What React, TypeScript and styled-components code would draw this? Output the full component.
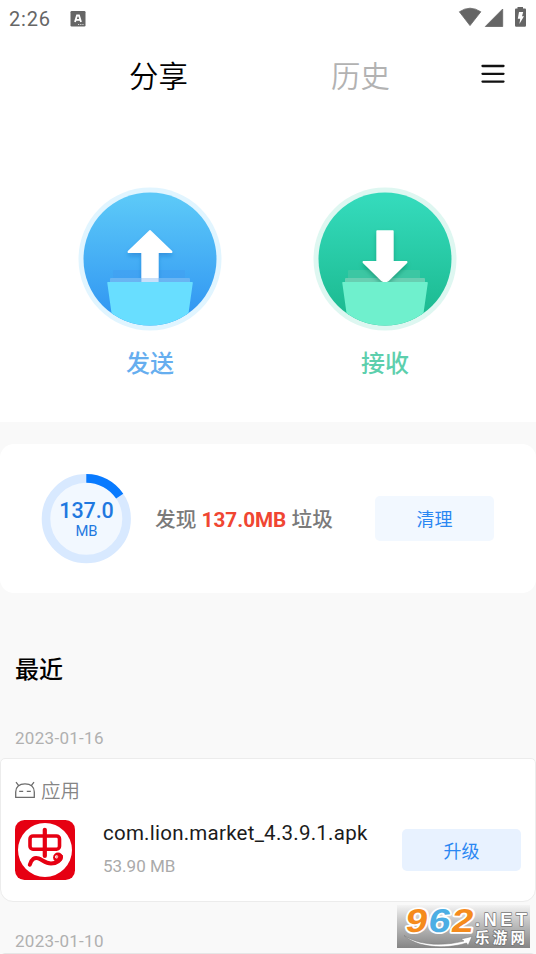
import React from 'react';
import styled, { createGlobalStyle } from 'styled-components';

const GlobalStyle = createGlobalStyle`
  *, *::before, *::after { box-sizing: border-box; }
  html, body { margin: 0; padding: 0; height: 100%; overflow: hidden; }
  body { background: #f9f9f9; font-family: Roboto, "Noto Sans CJK SC", sans-serif; }
  svg { display: block; }
`;

const Screen = styled.div`
  position: relative;
  width: 536px;
  height: 954px;
  overflow: hidden;
  background: #f9f9f9;
`;

const TopPanel = styled.section`
  height: 422px;
  background: #fff;
`;

const StatusBar = styled.div`
  display: flex;
  align-items: center;
  height: 38px;
  padding: 0 9px;
  color: #666;
`;

const Clock = styled.span`
  width: 61px;
  font-size: 20px;
  line-height: 38px;
  letter-spacing: 0.8px;
`;

const StatusIcons = styled.div`
  display: flex;
  margin: -2px 0 0 auto;
`;

const Tabs = styled.nav`
  display: grid;
  grid-template-columns: 115px 87px 115px 87px 1fr;
  align-items: center;
  height: 74px;
`;

const Tab = styled.span<{ $active?: boolean; $col: number }>`
  grid-column: ${(p) => p.$col};
  padding-top: 4px;
  text-align: center;
  font-size: 29.4px;
  line-height: 70px;
  font-weight: 350;
  color: ${(p) => (p.$active ? '#000' : '#b2b2b2')};
  white-space: nowrap;
`;

const MenuButton = styled.div`
  grid-column: 5;
  justify-self: end;
  margin: -2px 31px 0 0;
`;

const Actions = styled.div`
  display: flex;
  gap: 91px;
  padding: 75px 0 0 78px;
`;

const Action = styled.div<{ $color: string }>`
  display: flex;
  flex-direction: column;
  align-items: center;
  width: 144px;
  color: ${(p) => p.$color};
  font-size: 24px;
  font-weight: 500;
  line-height: 36px;
`;

const ActionLabel = styled.span`
  margin-top: 15px;
`;

const CleanCard = styled.section`
  display: flex;
  align-items: center;
  height: 149px;
  margin-top: 22px;
  padding: 0 42px 0 41px;
  border-radius: 14px;
  background: #fff;
`;

const Gauge = styled.div`
  display: grid;
  width: 90px;
  height: 90px;
  > * { grid-area: 1 / 1; }
`;

const GaugeText = styled.div`
  display: flex;
  flex-direction: column;
  align-items: center;
  padding: 25px 0 0 1px;
  color: #1f78df;
  font-weight: 500;
`;

const GaugeValue = styled.span`
  font-size: 21.5px;
  line-height: 24px;
  letter-spacing: -0.1px;
`;

const GaugeUnit = styled.span`
  font-size: 14.8px;
  line-height: 17px;
  font-weight: 400;
`;

const Found = styled.p`
  margin: 2px 0 0 24px;
  color: #7a7a7a;
  font-size: 20.7px;
  font-weight: 500;
  line-height: 30px;
  white-space: nowrap;
`;

const FoundSize = styled.strong`
  color: #f04632;
  font-weight: 700;
`;

const PillButton = styled.button<{ $tint: string; $height: number }>`
  width: 119px;
  height: ${(p) => p.$height}px;
  margin-left: auto;
  padding: 0 0 1px;
  border: 0;
  border-radius: 5px;
  background: ${(p) => p.$tint};
  color: #2a87f2;
  font: 400 18px Roboto, "Noto Sans CJK SC", sans-serif;
`;

const SectionTitle = styled.h2`
  margin: 59px 0 0 15px;
  font-size: 24px;
  line-height: 36px;
  font-weight: 500;
  color: #000;
`;

const DateLabel = styled.div<{ $top: number }>`
  margin: ${(p) => p.$top}px 0 0 15px;
  font-size: 17px;
  line-height: 20px;
  letter-spacing: 0.3px;
  color: #b0b0b0;
`;

const RecordCard = styled.article`
  height: 144px;
  margin-top: 10px;
  padding: 16px 14px 0 14px;
  border: 1px solid #ececec;
  border-radius: 5px 5px 13px 13px;
  background: #fff;
`;

const Category = styled.div`
  display: flex;
  align-items: center;
  gap: 6px;
  height: 29px;
  color: #858585;
  font-size: 19.5px;
  font-weight: 350;
`;

const RecordRow = styled.div`
  display: flex;
  align-items: center;
  height: 60px;
  margin-top: 16px;
`;

const FileInfo = styled.div`
  display: flex;
  flex-direction: column;
  margin: 0 0 5px 28px;
`;

const FileName = styled.span`
  font-size: 20.5px;
  line-height: 26px;
  letter-spacing: 0.24px;
  color: #1b1b1b;
  white-space: nowrap;
`;

const FileSize = styled.span`
  margin-top: 10px;
  font-size: 17px;
  line-height: 20px;
  color: #aaa;
`;

const NextCard = styled.article`
  height: 30px;
  margin-top: 2px;
  border: 1px solid #e6e6e6;
  border-radius: 5px;
  background: #fff;
`;

const Watermark = styled.div`
  position: absolute;
  left: 397px;
  top: 905px;
  width: 133px;
  height: 43px;
  background: linear-gradient(#f4f4f4 0%, #c8c8c8 35%, #858585 100%);
`;

const SEND = { id: 'send', halo: '#e1f5ff', from: '#5bc8f8', to: '#3095f2', folder: '#68deff', back: '#429ff0', mid: '#70b7f3', shade: '#176fc4' };
const RECEIVE = { id: 'receive', halo: '#def7f1', from: '#34dabb', to: '#1bb98f', folder: '#6ff0cd', back: '#3fc7a3', mid: '#68cfb2', shade: '#08785a' };

function TransferIcon({ tone, up }: { tone: typeof SEND; up: boolean }) {
  const clip = `${tone.id}-clip`;
  const fill = `${tone.id}-fill`;
  const shadow = `${tone.id}-shadow`;
  return (
    <svg width="144" height="144" viewBox="0 0 144 144">
      <defs>
        <linearGradient id={fill} x1="0" y1="0" x2="0" y2="1">
          <stop offset="0.05" stopColor={tone.from} />
          <stop offset="0.95" stopColor={tone.to} />
        </linearGradient>
        <clipPath id={clip}><circle cx="72" cy="72" r="66.5" /></clipPath>
        <filter id={shadow} x="-30%" y="-30%" width="160%" height="160%">
          <feDropShadow dx="0" dy="3" stdDeviation="2" floodColor={tone.shade} floodOpacity="0.45" />
        </filter>
      </defs>
      <circle cx="72" cy="72" r="71.5" fill={tone.halo} />
      <circle cx="72" cy="72" r="66.5" fill={`url(#${fill})`} />
      <g clipPath={`url(#${clip})`}>
        <rect x="35" y="83" width="72" height="12" rx="1" fill={tone.back} opacity={up ? 0.55 : 0.9} />
        {!up && <rect x="32" y="91" width="80" height="8" rx="1" fill={tone.mid} />}
        <path
          filter={`url(#${shadow})`}
          fill="#fff"
          stroke="#fff"
          strokeWidth="1.5"
          strokeLinejoin="round"
          d={up
            ? 'M72 43.8 L93.6 64.5 V65.3 H79.9 V95 H64.1 V65.3 H50.4 V64.5 Z'
            : 'M64.1 44 H79.9 V74.8 H93.6 V75.5 L75 93.5 Q72 96 69 93.5 L50.4 75.5 V74.8 H64.1 Z'}
        />
        {up && <rect x="32" y="91" width="80" height="6" rx="1" fill={tone.mid} opacity="0.88" />}
        {up && <rect x="63.5" y="91" width="17" height="4" fill="#c9e0fa" />}
        <path d="M30 95 H114 Q115 95 114.8 96 L108 144 H36 L29.3 96 Q29 95 30 95 Z" fill={tone.folder} />
      </g>
    </svg>
  );
}

function KeyboardIcon() {
  return (
    <svg width="16" height="17" viewBox="0 0 16 17">
      <rect x="0.5" y="0" width="15" height="15.5" rx="1.2" fill="#666" />
      <path d="M5 11 L7 4.5 H9 L11 11 M6 8.9 H10" fill="none" stroke="#fff" strokeWidth="1.8" />
      <path d="M8 13.5 H13.5" stroke="#ddd" strokeWidth="1" strokeDasharray="1.2 1" />
    </svg>
  );
}

function SignalIcons() {
  return (
    <svg width="70" height="22" viewBox="0 0 70 22">
      <path d="M2.4 4.8 Q13 -2.4 23.8 4.8 L13 18.6 Z" fill="#656565" stroke="#656565" strokeWidth="0.8" strokeLinejoin="round" />
      <path d="M45.7 2 V19.5 H28.3 Z" fill="#656565" stroke="#656565" strokeWidth="0.8" strokeLinejoin="round" />
      <path d="M60.5 0 H66 V1.6 H68 Q69 1.6 69 2.7 V18.5 Q69 19.8 67.8 19.8 H59.2 Q58 19.8 58 18.5 V2.7 Q58 1.6 59 1.6 H60.5 Z" fill="#656565" />
      <path d="M62 5 H66.2 L65 9.3 H67 L62.4 17 L63.2 11.7 H60.8 Z" fill="#fff" />
    </svg>
  );
}

function GaugeRing() {
  return (
    <svg width="90" height="90" viewBox="0 0 90 90">
      <circle cx="45.3" cy="44.7" r="37" fill="#f2f8ff" />
      <circle cx="45.3" cy="44.7" r="40.3" fill="none" stroke="#d8e9ff" strokeWidth="8.6" />
      <path d="M45.3 4.4 A40.3 40.3 0 0 1 78.7 22.2" fill="none" stroke="#087aff" strokeWidth="8.6" />
    </svg>
  );
}

function RobotIcon() {
  return (
    <svg width="20" height="18" viewBox="0 0 20 18" fill="none" stroke="#6c6c6c" strokeWidth="1.3" strokeLinejoin="round">
      <path d="M0.7 16.4 V11 C0.7 5.8 4.2 2.8 10 2.8 S19.3 5.8 19.3 11 V16.4 Z" />
      <path d="M3.9 4.8 L1 1.2 M16.1 4.8 L19 1.2 M4.2 10.4 H8.2 M11.8 10.4 H15.8" />
    </svg>
  );
}

function AppLogo() {
  return (
    <svg width="60" height="60" viewBox="0 0 60 60">
      <rect width="60" height="60" rx="9.5" fill="#e60012" />
      <circle cx="30" cy="30" r="27" fill="#fff" />
      <g fill="none" stroke="#e60012" strokeLinecap="round" strokeLinejoin="round">
        <rect x="15" y="16" width="29.5" height="13.2" rx="3" strokeWidth="3.6" />
        <path d="M29.8 9.8 V36" strokeWidth="4.2" />
        <path d="M14.8 44.8 C16.5 39 19.5 37 23.5 38.4 C27.5 39.8 30.5 43.4 36 43.4 Q44.5 43.4 46 36.5" strokeWidth="4" />
      </g>
      <circle cx="43" cy="37.4" r="4.9" fill="#e60012" />
      <circle cx="41.6" cy="36.8" r="1.6" fill="#fff" />
      <circle cx="42" cy="37" r="0.7" fill="#e60012" />
    </svg>
  );
}

function WatermarkLogo() {
  return (
    <svg width="133" height="43" viewBox="0 0 133 43" overflow="visible">
      <path d="M7 30.5 C23 41 47 41 67 36 L64 34 L75 31.5 L71 40.5 L69.5 38 C47 45 19 42 7 30.5 Z" fill="#fff" stroke="#777" strokeWidth="0.5" />
      <g fontFamily='"Liberation Sans", sans-serif' fontWeight="700" paintOrder="stroke" strokeLinejoin="round">
        <g fontSize="33" stroke="#fff" strokeWidth="3.4" transform="translate(4.5 0) skewX(-9)">
          <text x="7" y="27" textLength="22" lengthAdjust="spacingAndGlyphs" fill="#f58b1c">9</text>
          <text x="30" y="27" textLength="22" lengthAdjust="spacingAndGlyphs" fill="#4caee4">6</text>
          <text x="53" y="27" textLength="22" lengthAdjust="spacingAndGlyphs" fill="#f58b1c">2</text>
        </g>
        <text x="78" y="20.5" fontSize="18" textLength="52" fill="#fff" stroke="#777" strokeWidth="1.4">.NET</text>
      </g>
      <text x="78" y="38" fontFamily='"Noto Sans CJK SC", sans-serif' fontWeight="700" fontSize="14.5" textLength="50" fill="#fff" stroke="#777" strokeWidth="1.5" paintOrder="stroke">乐游网</text>
    </svg>
  );
}

export default function App() {
  return (
    <Screen>
      <GlobalStyle />
      <TopPanel>
        <StatusBar>
          <Clock>2:26</Clock>
          <KeyboardIcon />
          <StatusIcons><SignalIcons /></StatusIcons>
        </StatusBar>
        <Tabs>
          <Tab $active $col={2}>分享</Tab>
          <Tab $col={4}>历史</Tab>
          <MenuButton>
            <svg width="24" height="20" viewBox="0 0 24 20" stroke="#111" strokeWidth="2.3" strokeLinecap="round">
              <path d="M1.5 2 H22.5 M1.5 9.8 H22.5 M1.5 17.6 H22.5" />
            </svg>
          </MenuButton>
        </Tabs>
        <Actions>
          <Action $color="#66aeef">
            <TransferIcon tone={SEND} up />
            <ActionLabel>发送</ActionLabel>
          </Action>
          <Action $color="#5dcfad">
            <TransferIcon tone={RECEIVE} up={false} />
            <ActionLabel>接收</ActionLabel>
          </Action>
        </Actions>
      </TopPanel>

      <CleanCard>
        <Gauge>
          <GaugeRing />
          <GaugeText>
            <GaugeValue>137.0</GaugeValue>
            <GaugeUnit>MB</GaugeUnit>
          </GaugeText>
        </Gauge>
        <Found>发现 <FoundSize>137.0MB</FoundSize> 垃圾</Found>
        <PillButton $tint="#f2f8ff" $height={45}>清理</PillButton>
      </CleanCard>

      <SectionTitle>最近</SectionTitle>
      <DateLabel $top={40}>2023-01-16</DateLabel>
      <RecordCard>
        <Category><RobotIcon />应用</Category>
        <RecordRow>
          <AppLogo />
          <FileInfo>
            <FileName>com.lion.market_4.3.9.1.apk</FileName>
            <FileSize>53.90 MB</FileSize>
          </FileInfo>
          <PillButton $tint="#e8f2ff" $height={42}>升级</PillButton>
        </RecordRow>
      </RecordCard>
      <DateLabel $top={29}>2023-01-10</DateLabel>
      <NextCard />
      <Watermark><WatermarkLogo /></Watermark>
    </Screen>
  );
}
